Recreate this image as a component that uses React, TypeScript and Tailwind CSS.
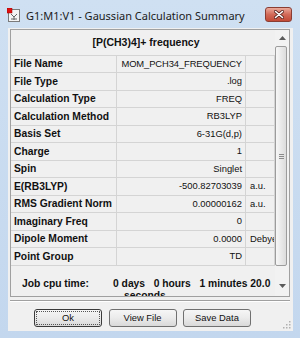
import React from "react";

const rows: [string, string, string][] = [
  ["File Name", "MOM_PCH34_FREQUENCY", ""],
  ["File Type", ".log", ""],
  ["Calculation Type", "FREQ", ""],
  ["Calculation Method", "RB3LYP", ""],
  ["Basis Set", "6-31G(d,p)", ""],
  ["Charge", "1", ""],
  ["Spin", "Singlet", ""],
  ["E(RB3LYP)", "-500.82703039", "a.u."],
  ["RMS Gradient Norm", "0.00000162", "a.u."],
  ["Imaginary Freq", "0", ""],
  ["Dipole Moment", "0.0000", "Debye"],
  ["Point Group", "TD", ""],
];

function Row({ r, i }: { r: [string, string, string]; i: number }) {
  const h = i % 2 === 0 ? "h-[17px]" : "h-[18px]";
  return (
    <div className={`flex shrink-0 ${h} border-b border-[#d4d4d4]`}>
      <div className="w-[106px] shrink-0 border-r border-[#d4d4d4] pl-[3px] flex items-center font-bold text-[10.3px] text-[#111]">
        {r[0]}
      </div>
      <div className="w-[129px] shrink-0 border-r border-[#d4d4d4] pr-[3px] flex items-center justify-end text-[9.4px] text-[#111] overflow-hidden whitespace-nowrap">
        <span className={r[0] === "File Name" ? "tracking-[-0.1px]" : ""}>{r[1]}</span>
      </div>
      <div className="w-[29px] shrink-0 border-r border-[#d4d4d4] pl-[4px] flex items-center text-[9.4px] text-[#111] overflow-hidden whitespace-nowrap">
        {r[2]}
      </div>
    </div>
  );
}

function Btn({ label, def }: { label: string; def?: boolean }) {
  return (
    <div
      className={`w-[68px] h-[18px] rounded-[3px] border ${
        def ? "border-[#3a3a3a]" : "border-[#707070]"
      } bg-linear-to-b from-[#f6f6f6] via-[#ebebeb] to-[#d9d9d9] flex items-center justify-center text-[9.4px] text-[#111]`}
    >
      <div
        className={`w-[64px] h-[14px] flex items-center justify-center ${
          def ? "border border-dotted border-[#555]" : ""
        }`}
      >
        {label}
      </div>
    </div>
  );
}

export default function App() {
  return (
    <div className="w-[300px] h-[338px] bg-linear-to-b from-[#cfe0f2] to-[#c3d7ee] flex flex-col font-['Liberation_Sans',Arial,sans-serif] overflow-hidden">
      {/* Title bar */}
      <div className="h-[28px] flex items-start shrink-0">
        <svg width="14" height="15" viewBox="0 0 14 15" className="ml-[7px] mt-[8px]">
          <rect x="1.5" y="1.5" width="11" height="12" fill="#f4f4f4" stroke="#7a7a7a" />
          <path d="M4 6 L7 9 L10 6 M7 9 L7 12 M4 11 L10 11" stroke="#666" fill="none" strokeWidth="1" />
          <rect x="0" y="0" width="5" height="5" fill="#e01010" stroke="#900" strokeWidth="0.5" />
        </svg>
        <div className="ml-[5px] mt-[9px] text-[11px] leading-[14px] text-[#1b1b1b] font-['Noto_Sans',sans-serif] whitespace-nowrap">
          G1:M1:V1 - Gaussian Calculation Summary
        </div>
        <div className="ml-auto mr-[8px] mt-[7px] w-[27px] h-[15px] rounded-[3px] border border-[#8a3d33] bg-linear-to-b from-[#eaa99b] via-[#d26a58] to-[#c24a36] flex items-center justify-center">
          <svg width="10" height="9" viewBox="0 0 10 9">
            <path d="M1.5 1.5 L8.5 7.5 M8.5 1.5 L1.5 7.5" stroke="#5b2620" strokeWidth="3" strokeLinecap="round" />
            <path d="M1.5 1.5 L8.5 7.5 M8.5 1.5 L1.5 7.5" stroke="#ffffff" strokeWidth="1.6" strokeLinecap="round" />
          </svg>
        </div>
      </div>

      {/* Client area */}
      <div className="relative ml-[8px] w-[285px] h-[303px] bg-[#f0f0f0] flex flex-col shrink-0">
        {/* Panel */}
        <div className="ml-[2px] mt-[1px] w-[280px] h-[268px] shrink-0 border border-[#a0a0a0] flex overflow-hidden">
          <div className="w-[264px] flex flex-col overflow-hidden">
            <div className="h-[26px] shrink-0 border-b border-[#d4d4d4] flex items-center justify-center font-bold text-[10.5px] text-[#111] pl-[6px]">
              [P(CH3)4]+ frequency
            </div>
            {rows.map((r, i) => (
              <Row key={r[0]} r={r} i={i} />
            ))}
            <div className="flex shrink-0 pt-[12px] font-bold text-[10.3px] text-[#111] leading-[12px]">
              <div className="w-[102px] pl-[11px] shrink-0">Job cpu time:</div>
              <div className="flex flex-col">
                <div className="whitespace-pre">0 days   0 hours   1 minutes 20.0</div>
                <div className="pl-[11px]">seconds</div>
              </div>
            </div>
          </div>
          {/* Scrollbar */}
          <div className="w-[14px] flex flex-col items-center bg-[#f2f2f2]">
            <div className="h-[16px] w-full shrink-0 flex items-center justify-center">
              <svg width="7" height="4" viewBox="0 0 7 4">
                <path d="M0 4 L3.5 0 L7 4 Z" fill="#5a5a5a" />
              </svg>
            </div>
            <div className="ml-[-2px] w-[12px] h-[220px] shrink-0 rounded-[2px] border border-[#9c9c9c] bg-linear-to-r from-[#f7f7f7] to-[#dcdcdc] flex items-center justify-center">
              <div className="flex flex-col gap-[1px]">
                <div className="w-[5px] h-[1px] bg-[#8a8a8a]" />
                <div className="w-[5px] h-[1px] bg-[#8a8a8a]" />
                <div className="w-[5px] h-[1px] bg-[#8a8a8a]" />
              </div>
            </div>
            <div className="flex-1 w-full flex items-end justify-center pb-[8px]">
              <svg width="7" height="4" viewBox="0 0 7 4">
                <path d="M0 0 L3.5 4 L7 0 Z" fill="#5a5a5a" />
              </svg>
            </div>
          </div>
        </div>

        {/* Separator */}
        <div className="ml-[2px] mt-[3px] w-[280px] h-[2px] shrink-0 border-t border-[#a0a0a0] border-b border-b-white" />

        {/* Buttons */}
        <div className="ml-[26px] mt-[7px] flex gap-[6.5px]">
          <Btn label="Ok" def />
          <Btn label="View File" />
          <Btn label="Save Data" />
        </div>

        {/* Resize grip */}
        <svg width="8" height="8" viewBox="0 0 8 8" className="absolute right-[2px] bottom-[2px]">
          <rect x="6" y="0" width="1.5" height="1.5" fill="#b0b0b0" />
          <rect x="3" y="3" width="1.5" height="1.5" fill="#b0b0b0" />
          <rect x="6" y="3" width="1.5" height="1.5" fill="#b0b0b0" />
          <rect x="0" y="6" width="1.5" height="1.5" fill="#b0b0b0" />
          <rect x="3" y="6" width="1.5" height="1.5" fill="#b0b0b0" />
          <rect x="6" y="6" width="1.5" height="1.5" fill="#b0b0b0" />
        </svg>
      </div>
    </div>
  );
}
